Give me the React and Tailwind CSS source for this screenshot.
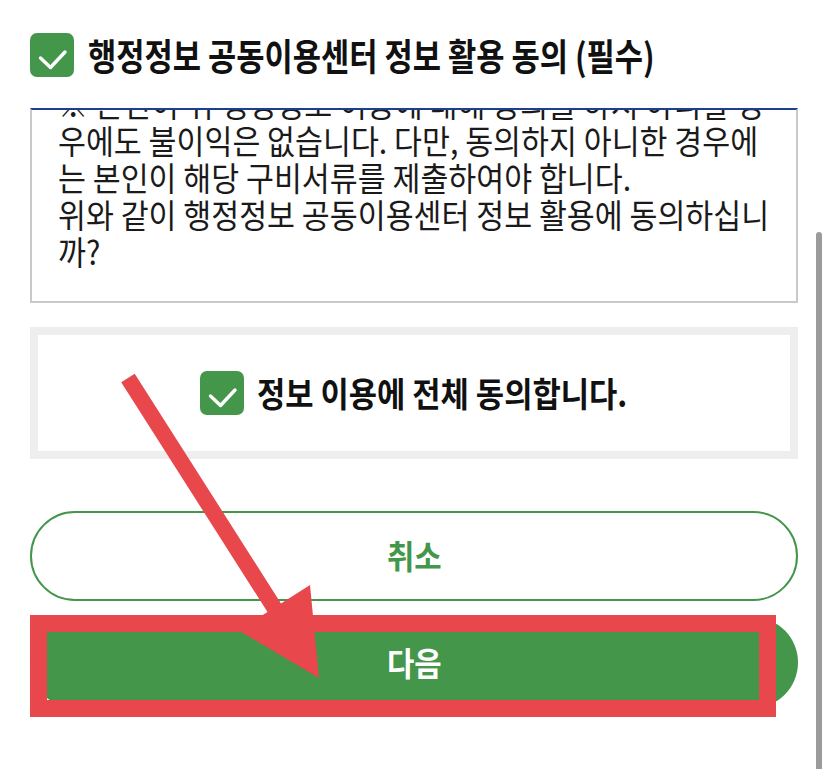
import React from 'react'

const lines = [
  '※ 본인이 위 행정정보 이용에 대해 동의를 하지 아니할 경',
  '우에도 불이익은 없습니다. 다만, 동의하지 아니한 경우에',
  '는 본인이 해당 구비서류를 제출하여야 합니다.',
  '위와 같이 행정정보 공동이용센터 정보 활용에 동의하십니',
  '까?',
]

const CheckBox = () => (
  <div className="flex h-[44px] w-[44px] shrink-0 items-center justify-center rounded-[7px] bg-[#43964a]">
    <svg width="44" height="44" viewBox="0 0 44 44" fill="none">
      <path d="M10.5 25 L20.5 34.5 L35 19" stroke="white" strokeWidth="3.4" strokeLinecap="round" strokeLinejoin="round" />
    </svg>
  </div>
)

const App = () => {
  return (
    <div className="relative h-[769px] w-[828px] overflow-hidden bg-white font-['Noto_Sans_CJK_KR',sans-serif]">
      <div className="px-[30px] pt-[33px]">
        {/* 제목 */}
        <div className="flex items-center gap-[14px]">
          <CheckBox />
          <span className="origin-left scale-x-[0.83] whitespace-nowrap text-[37px] font-bold leading-none text-[#111]">
            행정정보 공동이용센터 정보 활용 동의 (필수)
          </span>
        </div>

        {/* 약관 내용 */}
        <div className="mt-[31px] h-[195px] overflow-hidden border-2 border-[#c9c9c9] border-t-[#1e3f8f] pl-[26px]">
          <div className="-mt-[25px]">
            {lines.map((line, i) => (
              <div
                key={i}
                className="origin-left scale-x-[0.92] whitespace-nowrap text-[33px] leading-[37px] text-[#1a1a1a]"
              >
                {line}
              </div>
            ))}
          </div>
        </div>

        {/* 전체 동의 */}
        <div className="mt-[24px] flex h-[132px] items-center justify-center border-8 border-[#eeeeee] bg-white">
          <div className="flex items-center gap-[13px]">
            <CheckBox />
            <span className="-mr-[39px] origin-left scale-x-[0.904] whitespace-nowrap text-[34px] font-bold leading-none text-[#111]">
              정보 이용에 전체 동의합니다.
            </span>
          </div>
        </div>

        {/* 버튼 */}
        <button className="mt-[52px] flex h-[90px] w-full items-center justify-center rounded-full border-2 border-[#43964a] bg-white">
          <span className="scale-x-[0.9] text-[33px] font-bold text-[#43964a]">취소</span>
        </button>
        <button className="mt-[16px] flex h-[91px] w-full items-center justify-center rounded-full bg-[#43964a]">
          <span className="scale-x-[0.9] text-[33px] font-bold text-white">다음</span>
        </button>
      </div>

      {/* 스크롤바 */}
      <div className="absolute right-[6px] top-[232px] h-[540px] w-[6px] rounded-t-[3px] bg-[#9b9b9b]" />

      {/* 안내 표시 (빨간 화살표 / 박스) */}
      <svg className="pointer-events-none absolute left-0 top-0" width="828" height="769" viewBox="0 0 828 769">
        <rect x="38.5" y="623.5" width="729" height="85" fill="none" stroke="#e8474c" strokeWidth="17" />
        <polygon
          points="121.2,382.3 134.7,373.7 281,603.4 310,585 319,678 238.6,630.4 267.5,612"
          fill="#e8474c"
        />
      </svg>
    </div>
  )
}

export default App
